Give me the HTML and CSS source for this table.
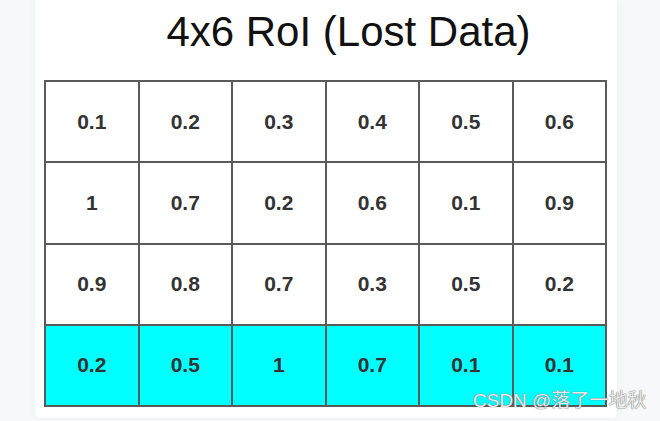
FILE: index.html
```html
<!DOCTYPE html>
<html>
<head>
<meta charset="utf-8">
<link rel="stylesheet" href="styles.css">
</head>
<body>
<div class="card">
  <h1 class="title">4x6 RoI (Lost Data)</h1>
  <div class="grid">
    <div class="cell">0.1</div><div class="cell">0.2</div><div class="cell">0.3</div><div class="cell">0.4</div><div class="cell">0.5</div><div class="cell">0.6</div>
    <div class="cell">1</div><div class="cell">0.7</div><div class="cell">0.2</div><div class="cell">0.6</div><div class="cell">0.1</div><div class="cell">0.9</div>
    <div class="cell">0.9</div><div class="cell">0.8</div><div class="cell">0.7</div><div class="cell">0.3</div><div class="cell">0.5</div><div class="cell">0.2</div>
    <div class="cell lost">0.2</div><div class="cell lost">0.5</div><div class="cell lost">1</div><div class="cell lost">0.7</div><div class="cell lost">0.1</div><div class="cell lost">0.1</div>
  </div>
</div>
<div class="watermark">CSDN @落了一地秋</div>
</body>
</html>
```

FILE: styles.css
```css
html, body {
  margin: 0;
  padding: 0;
}
body {
  background: #f7f8fa;
  width: 660px;
  height: 421px;
  position: relative;
  overflow: hidden;
  font-family: "Liberation Sans", Arial, sans-serif;
}
.card {
  margin-left: 35px;
  width: 582px;
  height: 418px;
  box-sizing: border-box;
  background: #fff;
  border-radius: 0 0 5px 5px;
  box-shadow: 0 0 10px rgba(0, 0, 0, 0.05);
  padding: 8px 0 0 9px;
}
.title {
  margin: 0 0 24px 0;
  padding-left: 46px;
  width: 563px;
  box-sizing: border-box;
  text-align: center;
  font-weight: normal;
  font-size: 42px;
  line-height: 48px;
  color: #111;
  white-space: nowrap;
}
.grid {
  width: 563px;
  height: 327px;
  box-sizing: border-box;
  display: grid;
  grid-template-columns: repeat(6, 1fr);
  grid-template-rows: repeat(4, 1fr);
  border-top: 2px solid #5a5a5a;
  border-left: 2px solid #5a5a5a;
}
.cell {
  border-right: 2px solid #5a5a5a;
  border-bottom: 2px solid #5a5a5a;
  display: flex;
  align-items: center;
  justify-content: center;
  font-weight: bold;
  font-size: 21px;
  color: #333;
}
.lost {
  background: #00ffff;
}
.watermark {
  position: absolute;
  left: 473px;
  top: 389px;
  font-family: "Liberation Sans", "Noto Sans CJK SC", sans-serif;
  font-size: 19px;
  line-height: 24px;
  color: rgba(255, 255, 255, 0.85);
  text-shadow: 0 0 1px #777, 0 0 1px #777;
  white-space: nowrap;
}
```
